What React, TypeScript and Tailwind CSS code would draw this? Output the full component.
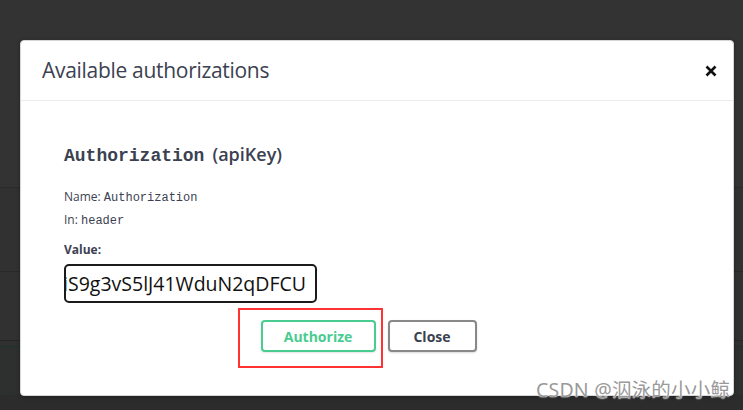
import React from 'react';

const sans = { fontFamily: '"Open Sans", "Noto Sans", sans-serif' };
const mono = { fontFamily: '"Liberation Mono", "DejaVu Sans Mono", monospace' };

function Backdrop() {
  // faint rows of the page behind the dark overlay
  return (
    <div className="flex flex-col w-full h-full">
      <div className="h-[188px] bg-[#333333] border-b border-[#2a2a2a]" />
      <div className="h-[84px] bg-[#303130] border-b border-[#282828]" />
      <div className="h-[69px] bg-[#303130] border-b border-[#262626]" />
      <div className="h-[6px] bg-[#2f302f] border-b border-[#1d3328]" />
      <div className="h-[48px] bg-[#2e302f]" />
      <div className="flex-1 bg-[#2c2c2c]" />
    </div>
  );
}

export default function App() {
  return (
    <div className="relative w-[743px] h-[410px] overflow-hidden bg-[#333333]" style={sans}>
      <Backdrop />

      {/* modal */}
      <div className="absolute left-[20px] top-[40px] w-[714px] h-[356px] bg-white rounded-[4px] border border-[#d6d6d6] shadow-[0_1px_4px_rgba(0,0,0,0.3)] flex flex-col">
        <div className="h-[60px] flex items-center justify-between pl-[21px] pr-[16px] border-b border-[#ebebeb]">
          <h3 className="text-[21px] text-[#3b4151] tracking-[-0.3px]">
            Available authorizations
          </h3>
          <svg width="12" height="12" viewBox="0 0 12 12">
            <path d="M1.5 1.5 L10.5 10.5 M10.5 1.5 L1.5 10.5" stroke="#111" strokeWidth="2.6" strokeLinecap="butt" />
          </svg>
        </div>

        <div className="flex flex-col pl-[43px] pt-[41px]">
          <h4 className="text-[18px] text-[#3b4151] font-semibold leading-[24px]">
            <code className="font-bold text-[18px]" style={mono}>Authorization</code>
            <span className="ml-[8px]">(apiKey)</span>
          </h4>

          <div className="mt-[21px] text-[12px] text-[#3b4151] leading-[16px]">
            Name: <code className="text-[12px]" style={mono}>Authorization</code>
          </div>
          <div className="mt-[6px] text-[12px] text-[#3b4151] leading-[16px]">
            In: <code className="text-[12px]" style={mono}>header</code>
          </div>

          <label className="mt-[13px] text-[12px] font-bold text-[#3b4151] leading-[16px]">Value:</label>
          <div className="mt-[6px] w-[253px] h-[39px] border-2 border-[#1b1b1b] rounded-[5px] flex items-center justify-end overflow-hidden pr-[9px]">
            <span className="whitespace-nowrap text-[19.5px] text-[#111]">
              iS9g3vS5lJ41WduN2qDFCU
            </span>
          </div>

          <div className="flex justify-center gap-[12px] mt-[17px] pr-[60px]">
            <button className="w-[115px] h-[32px] border-2 border-[#49cc90] rounded-[4px] text-[14px] font-bold text-[#49cc90] shadow-[0_1px_2px_rgba(0,0,0,0.1)] bg-white">
              Authorize
            </button>
            <button className="w-[89px] h-[32px] border-2 border-[#888888] rounded-[4px] text-[14px] font-bold text-[#3b4151] shadow-[0_1px_2px_rgba(0,0,0,0.15)] bg-white">
              Close
            </button>
          </div>
        </div>
      </div>

      {/* red annotation box */}
      <div className="absolute left-[238px] top-[308px] w-[145px] h-[60px] border-[2.5px] border-[#ff3333]" />

      {/* watermark */}
      <div
        className="absolute left-[536px] top-[377px] text-[19.5px] leading-[26px] text-[#9a9a9a] whitespace-nowrap tracking-[0.2px]"
        style={{
          fontFamily: '"Noto Sans", "Noto Sans CJK SC", sans-serif',
          textShadow: '0 0 2px #fff, 0 0 1px #fff',
        }}
      >
        CSDN @泅泳的小小鲸
      </div>
    </div>
  );
}
